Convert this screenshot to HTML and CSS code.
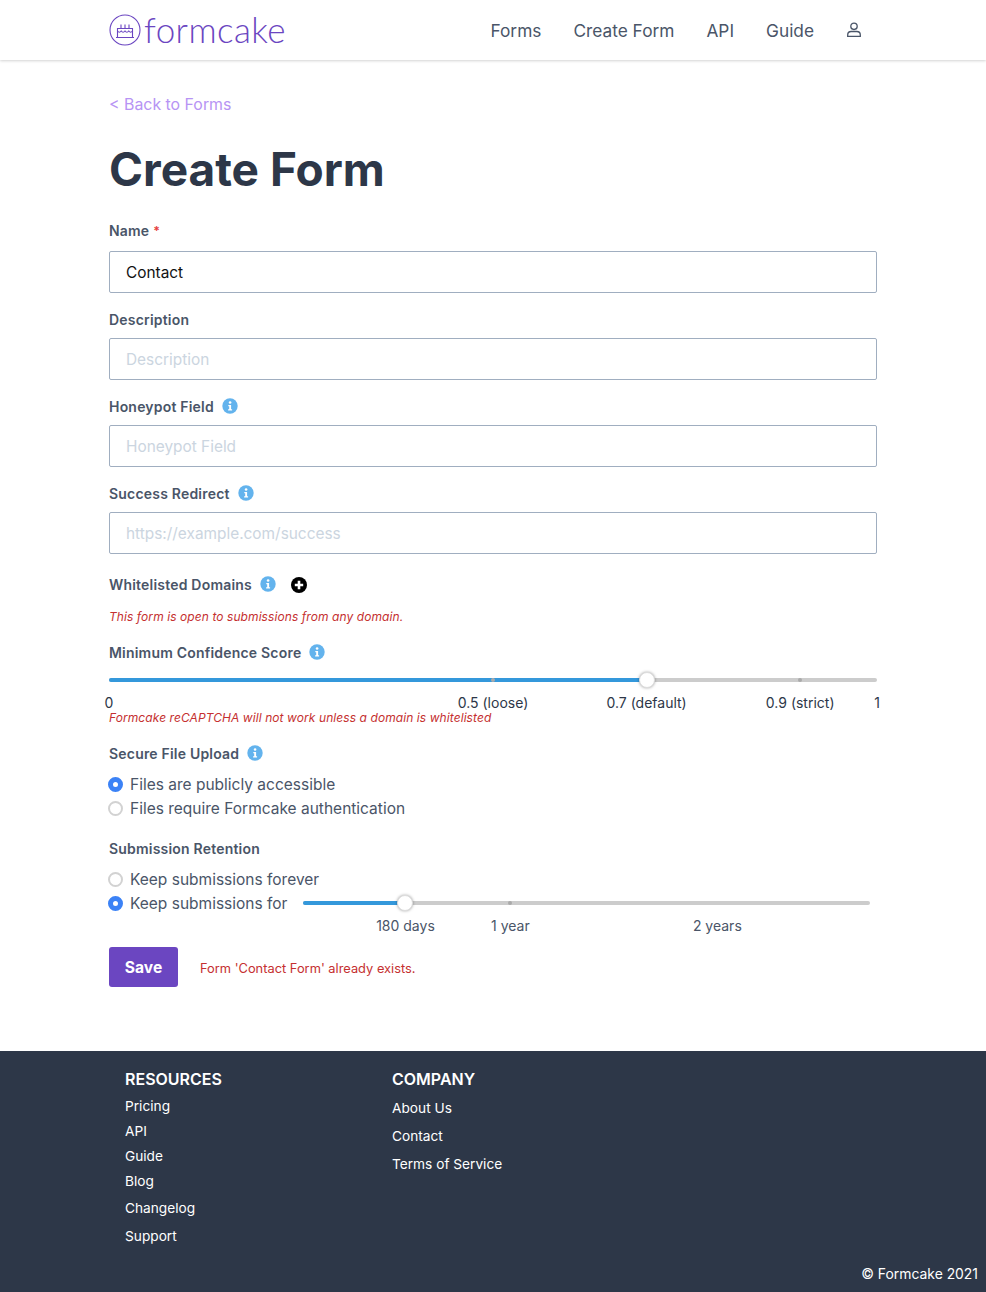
FILE: index.html
```html
<!DOCTYPE html>
<html lang="en">
<head>
<meta charset="utf-8">
<title>Create Form</title>
<link rel="stylesheet" href="styles.css">
</head>
<body>
<header class="site-header">
  <div class="header-inner">
    <a class="logo">
      <svg class="logo-mark" viewBox="0 0 32 32" fill="none" stroke="#6b46c1" stroke-width="1.1">
        <circle cx="16" cy="16" r="15"/>
        <path d="M8.5 14.5h15v9h-15z"/>
        <path d="M8.5 17c1.2 1.6 2.5 1.6 3.7 0 1.2 1.6 2.5 1.6 3.8 0 1.2 1.6 2.5 1.6 3.8 0 1.200 1.600 2.500 1.600 3.700 0"/>
        <path d="M7 23.500h18M12 14.500v-4M16 14.500v-4M20 14.500v-4"/>
      </svg>
      <span class="logo-text">formcake</span>
    </a>
    <nav class="main-nav">
      <a>Forms</a>
      <a>Create Form</a>
      <a>API</a>
      <a>Guide</a>
      <svg class="user-icon" viewBox="0 0 16 16" fill="none" stroke="#4a5568" stroke-width="1.300">
        <circle cx="8" cy="4.300" r="3.200"/>
        <path d="M1.700 13c0-2.400 1.800-3.500 3.500-3.500h5.600c1.700 0 3.500 1.100 3.500 3.500v1.300H1.700z"/>
      </svg>
    </nav>
  </div>
</header>

<main class="page">
  <a class="back-link">&lt; Back to Forms</a>
  <h1 class="title">Create Form</h1>

  <div class="field field-name">
    <label class="label">Name <span class="required">*</span></label>
    <div class="input filled">Contact</div>
  </div>
  <div class="field">
    <label class="label">Description</label>
    <div class="input">Description</div>
  </div>
  <div class="field">
    <label class="label">Honeypot Field <svg class="info"><use href="#i-info"/></svg></label>
    <div class="input">Honeypot Field</div>
  </div>
  <div class="field">
    <label class="label">Success Redirect <svg class="info"><use href="#i-info"/></svg></label>
    <div class="input">https://example.com/success</div>
  </div>

  <div class="domains">
    <label class="label">Whitelisted Domains <svg class="info"><use href="#i-info"/></svg>
      <svg class="plus" viewBox="0 0 16 16"><circle cx="8" cy="8" r="8" fill="#000"/><path d="M8 3.800v8.400M3.800 8h8.400" stroke="#fff" stroke-width="2.600"/></svg>
    </label>
    <p class="note note-domain">This form is open to submissions from any domain.</p>
  </div>

  <div class="confidence">
    <label class="label">Minimum Confidence Score <svg class="info"><use href="#i-info"/></svg></label>
    <div class="slider slider-score">
      <div class="track"></div>
      <div class="fill" style="width:70%"></div>
      <i class="dot" style="left:50%"></i>
      <i class="dot" style="left:90%"></i>
      <i class="handle" style="left:70%"></i>
      <span class="mark" style="left:0">0</span>
      <span class="mark" style="left:50%">0.5 (loose)</span>
      <span class="mark" style="left:70%">0.7 (default)</span>
      <span class="mark" style="left:90%">0.9 (strict)</span>
      <span class="mark" style="left:100%">1</span>
    </div>
    <p class="note note-captcha">Formcake reCAPTCHA will not work unless a domain is whitelisted</p>
  </div>

  <div class="upload">
    <label class="label">Secure File Upload <svg class="info"><use href="#i-info"/></svg></label>
    <div class="radios">
      <div class="radio-row"><i class="radio on"></i>Files are publicly accessible</div>
      <div class="radio-row"><i class="radio"></i>Files require Formcake authentication</div>
    </div>
  </div>

  <div class="retention">
    <label class="label">Submission Retention</label>
    <div class="radios">
      <div class="radio-row"><i class="radio"></i>Keep submissions forever</div>
      <div class="radio-row"><i class="radio on"></i>Keep submissions for
        <div class="slider slider-days">
          <div class="track"></div>
          <div class="fill" style="width:18%"></div>
          <i class="dot" style="left:36.500%"></i>
          <i class="handle" style="left:18%"></i>
          <span class="mark" style="left:18%">180 days</span>
          <span class="mark" style="left:36.500%">1 year</span>
          <span class="mark" style="left:73%">2 years</span>
        </div>
      </div>
    </div>
  </div>

  <div class="actions">
    <button class="save" type="button">Save</button>
    <span class="error">Form 'Contact Form' already exists.</span>
  </div>
</main>

<footer class="site-footer">
  <div class="footer-cols">
    <div class="col col-resources">
      <h2>RESOURCES</h2>
      <a>Pricing</a>
      <a>API</a>
      <a>Guide</a>
      <a>Blog</a>
      <a class="wide">Changelog</a>
      <a class="wide">Support</a>
    </div>
    <div class="col col-company">
      <h2>COMPANY</h2>
      <a>About Us</a>
      <a>Contact</a>
      <a>Terms of Service</a>
    </div>
  </div>
  <div class="copyright">© Formcake 2021</div>
</footer>

<svg class="defs" aria-hidden="true">
  <symbol id="i-info" viewBox="0 0 16 16">
    <circle cx="8" cy="8" r="7.700" fill="#63b3ed"/>
    <circle cx="8.100" cy="4.500" r="1.300" fill="#fff"/>
    <path d="M6.300 6.900h2.800v4.300h1v1.300H6.100v-1.300h1.100V8.200h-.9z" fill="#fff"/>
  </symbol>
</svg>
</body>
</html>
```
FILE: styles.css
```css
* { box-sizing: border-box; }
html, body { margin: 0; padding: 0; }
body {
  font-family: Inter, "Liberation Sans", sans-serif;
  color: #4a5568;
  background: #fff;
  width: 986px;
  height: 1292px;
  overflow: hidden;
  display: flex;
  flex-direction: column;
}
.defs { width: 0; height: 0; position: absolute; }

.site-header {
  height: 60px;
  background: #fff;
  box-shadow: 0 1px 3px rgba(0,0,0,.12), 0 1px 2px rgba(0,0,0,.06);
  flex: none;
}
.header-inner {
  width: 768px;
  margin-left: 109px;
  height: 100%;
  display: flex;
  align-items: center;
  justify-content: space-between;
}
.logo { display: flex; align-items: center; color: #6b46c1; }
.logo-mark { width: 32px; height: 32px; margin-right: 3px; }
.logo-text {
  font-family: Lato, sans-serif;
  font-weight: 300;
  font-size: 35px;
  line-height: 30px;
  letter-spacing: .42px;
  margin-bottom: 2px;
}
.main-nav {
  display: flex;
  align-items: center;
  gap: 32px;
  padding-right: 15px;
  padding-top: 2px;
  font-size: 17.3px;
  line-height: 28px;
}
.user-icon { width: 16px; height: 16px; margin-bottom: 2px; }

.page {
  flex: 1;
  width: 768px;
  margin-left: 109px;
  padding-top: 35px;
}
.back-link { display: block; font-size: 15.9px; line-height: 20px; color: #b794f4; }
.title {
  margin: 24px 0 0;
  font-size: 46px;
  line-height: 60px;
  font-weight: 700;
  color: #2d3748;
}
.label {
  display: flex;
  align-items: center;
  height: 20px;
  font-size: 14px;
  font-weight: 600;
  line-height: 20px;
  letter-spacing: .2px;
  color: #4a5568;
}
.required { color: #e53e3e; font-size: 12px; font-weight: 700; margin-left: 4px; }
.info { width: 16px; height: 16px; margin-left: 8px; margin-top: -2px; }
.plus { width: 16px; height: 16px; margin-left: 15px; }
.field { margin-bottom: 17px; }
.field-name { margin-top: 22px; }
.field-name .label { margin-bottom: 10px; }
.input {
  margin-top: 8px;
  height: 42px;
  padding: 2px 16px 0;
  border: 1px solid #a0aec0;
  border-radius: 2px;
  font-size: 15.4px;
  line-height: 38px;
  color: #cbd5e0;
}
.input.filled { color: #111; }

.domains { margin-top: 21px; }
.note {
  margin: 0;
  font-size: 12px;
  line-height: 16px;
  font-style: italic;
  letter-spacing: .08px;
  color: #c53030;
}
.note-domain { margin-top: 14px; }
.confidence { margin-top: 18px; }

.slider { position: relative; height: 4px; }
.slider-score { margin-top: 15px; }
.track { height: 4px; border-radius: 2px; background: #ccc; }
.fill { position: absolute; left: 0; top: 0; height: 4px; border-radius: 2px; background: #3498db; }
.dot {
  position: absolute; top: 0; width: 4px; height: 4px;
  margin-left: -2px; border-radius: 50%; background: #aaa;
}
.handle {
  position: absolute; top: -6px; width: 16px; height: 16px;
  margin-left: -8px; border-radius: 50%; background: #fff;
  border: 1px solid #ddd;
  box-shadow: 0 0 3px rgba(0,0,0,.35);
}
.mark {
  position: absolute; top: 15px;
  transform: translateX(-50%);
  white-space: nowrap;
  font-size: 14px;
  line-height: 20px;
  color: #4a5568;
}
.slider-score .mark { color: #2d3748; }
.note-captcha { margin-top: 28px; }

.upload { margin-top: 18px; }
.radios { margin-top: 8px; }
.radio-row {
  display: flex;
  align-items: center;
  height: 24px;
  font-size: 15.5px;
  color: #4a5568;
}
.radio {
  width: 15px; height: 15px;
  margin-right: 7px;
  margin-left: -1px;
  border-radius: 50%;
  border: 2px solid #d2d2d2;
  background: #fff;
  flex: none;
}
.radio.on {
  border: 5px solid #3b82f6;
  background: #fff;
}
.retention { margin-top: 19px; }
.slider-days { flex: none; width: 567px; margin-left: 16px; }

.actions { display: flex; align-items: center; margin-top: 32px; }
.save {
  width: 69px;
  height: 40px;
  border: 0;
  border-radius: 3px;
  background: #6b46c1;
  color: #fff;
  font: 700 15.6px Inter, sans-serif;
}
.error { margin-left: 22px; margin-top: 3px; font-size: 12.85px; line-height: 16px; color: #c53030; }

.site-footer {
  flex: none;
  height: 241px;
  background: #2d3748;
  color: #fff;
  position: relative;
  padding: 18px 0 0 125px;
}
.footer-cols { display: flex; }
.col { width: 267px; display: flex; flex-direction: column; align-items: flex-start; }
.col h2 { margin: 0; font-size: 16px; line-height: 20px; font-weight: 600; }
.col a { font-size: 13.7px; line-height: 20px; }
.col-resources a { margin-top: 5px; }
.col-resources h2 + a { margin-top: 7px; }
.col-resources a.wide { margin-top: 7px; }
.col-resources a.wide + a.wide { margin-top: 8px; }
.col-company a { margin-top: 8px; }
.col-company h2 + a { margin-top: 9px; }
.copyright {
  position: absolute;
  right: 8px;
  bottom: 8px;
  font-size: 13.9px;
  line-height: 20px;
}
```
